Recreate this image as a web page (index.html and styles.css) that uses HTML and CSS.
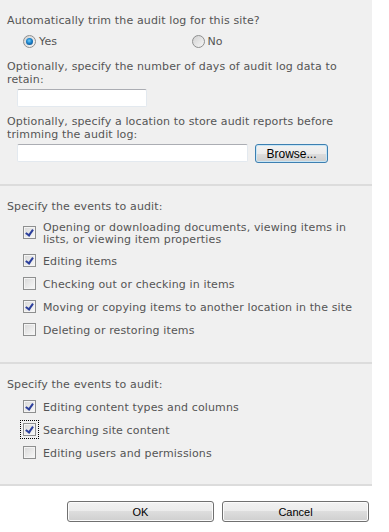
FILE: index.html
```html
<!DOCTYPE html>
<html lang="en">
<head>
  <meta charset="UTF-8" />
  <title>Audit Settings</title>
  <link rel="stylesheet" href="styles.css">
</head>
<body>

<div class="panel">
  <div class="section trim">
    <div class="label">Automatically trim the audit log for this site?</div>
    <div class="radios">
      <span class="opt"><span class="radio on"></span>Yes</span>
      <span class="opt"><span class="radio"></span>No</span>
    </div>
    <div class="label gap">Optionally, specify the number of days of audit log data to retain:</div>
    <div class="field"><input class="textbox short" type="text"></div>
    <div class="label gap-small">Optionally, specify a location to store audit reports before trimming the audit log:</div>
    <div class="field">
      <input class="textbox long" type="text">
      <button class="btn browse">Browse...</button>
    </div>
  </div>

  <div class="section events">
    <div class="label">Specify the events to audit:</div>
    <ul class="checks">
      <li class="check wrap"><span class="box on"></span><span class="text">Opening or downloading documents, viewing items in lists, or viewing item properties</span></li>
      <li class="check"><span class="box on"></span><span class="text">Editing items</span></li>
      <li class="check"><span class="box"></span><span class="text">Checking out or checking in items</span></li>
      <li class="check"><span class="box on"></span><span class="text">Moving or copying items to another location in the site</span></li>
      <li class="check"><span class="box"></span><span class="text">Deleting or restoring items</span></li>
    </ul>
  </div>

  <div class="section events last">
    <div class="label">Specify the events to audit:</div>
    <ul class="checks">
      <li class="check"><span class="box on"></span><span class="text">Editing content types and columns</span></li>
      <li class="check"><span class="box on focus"></span><span class="text">Searching site content</span></li>
      <li class="check"><span class="box"></span><span class="text">Editing users and permissions</span></li>
    </ul>
  </div>
</div>

<div class="footer">
  <button class="btn wide">OK</button>
  <button class="btn wide">Cancel</button>
</div>

</body>
</html>
```

FILE: styles.css
```css
body {
  margin: 0;
  background: #fff;
  color: #555;
  font-family: "DejaVu Sans", Verdana, sans-serif;
  font-size: 11px;
  line-height: 13px;
  letter-spacing: 0.13px;
}
.panel {
  width: 372px;
  background: #f0f0f0;
}
.section {
  padding: 14px 12px 0 7px;
  border-bottom: 2px solid #dcdcdc;
}
.trim { padding-bottom: 21px; }
.events { padding-bottom: 24px; }
.events.last { padding-bottom: 23px; }

.label.gap { margin-top: 12px; }
.label.gap-small { margin-top: 8px; }

.radios {
  display: flex;
  margin-top: 8px;
  padding-left: 16px;
}
.opt {
  display: flex;
  align-items: center;
  gap: 3px;
  width: 171px;
}
.radio {
  width: 11px;
  height: 11px;
  border: 1px solid #8e8f8f;
  border-radius: 50%;
  background: linear-gradient(135deg, #d2d2d2, #f6f6f6);
  display: flex;
  align-items: center;
  justify-content: center;
}
.radio.on::after {
  content: "";
  width: 7px;
  height: 7px;
  border-radius: 50%;
  background: radial-gradient(circle at 45% 40%, #6fd0ff 0, #1a80c8 45%, #0b3f7a 100%);
}

.field {
  display: flex;
  gap: 7px;
  margin-top: 3px;
  padding-left: 10px;
}
.textbox {
  box-sizing: border-box;
  height: 18px;
  margin: 0;
  padding: 0 2px;
  border: 1px solid #e3e9ef;
  border-top-color: #abadb3;
  border-radius: 2px;
  background: #fff;
  font: inherit;
}
.textbox.short { width: 130px; }
.textbox.long { width: 231px; }

.btn {
  box-sizing: border-box;
  margin: 0;
  padding: 0;
  border: 1px solid #707070;
  border-radius: 3px;
  background: linear-gradient(#f2f2f2 0%, #ebebeb 50%, #dddddd 50%, #cfcfcf 100%);
  box-shadow: inset 0 0 0 1px #fbfbfb;
  color: #000;
  font-family: "Liberation Sans", Arial, sans-serif;
  font-size: 11px;
  letter-spacing: 0;
}
.browse {
  width: 73px;
  height: 19px;
  font-size: 12px;
  border-color: #3c7fb1;
  box-shadow: inset 0 0 0 1px #c8e6f6;
}
.wide {
  width: 147px;
  height: 21px;
}

.checks {
  list-style: none;
  margin: 9px 0 0;
  padding: 0 0 0 16px;
  display: flex;
  flex-direction: column;
  gap: 8px;
}
.check {
  display: flex;
  align-items: flex-start;
  gap: 7px;
  min-height: 15px;
}
.check .text { padding-top: 1px; }
.check.wrap .text {
  padding-top: 0;
  line-height: 12px;
}
.check.wrap .box { margin-top: 4px; }
.box {
  flex: none;
  position: relative;
  box-sizing: border-box;
  width: 13px;
  height: 13px;
  border: 1px solid #8e8f8f;
  background: linear-gradient(135deg, #d8d8d8, #f8f8f8);
  box-shadow: inset 0 0 0 1px #f4f4f4;
}
.box.on::after {
  content: "";
  position: absolute;
  left: 3px;
  top: 1px;
  width: 3px;
  height: 6px;
  border: solid #2b3f9c;
  border-width: 0 2px 2px 0;
  transform: rotate(35deg);
}
.box.focus {
  outline: 1px dotted #000;
  outline-offset: 2px;
}

.footer {
  display: flex;
  justify-content: flex-end;
  gap: 8px;
  padding: 15px 20px 0 0;
}
```
